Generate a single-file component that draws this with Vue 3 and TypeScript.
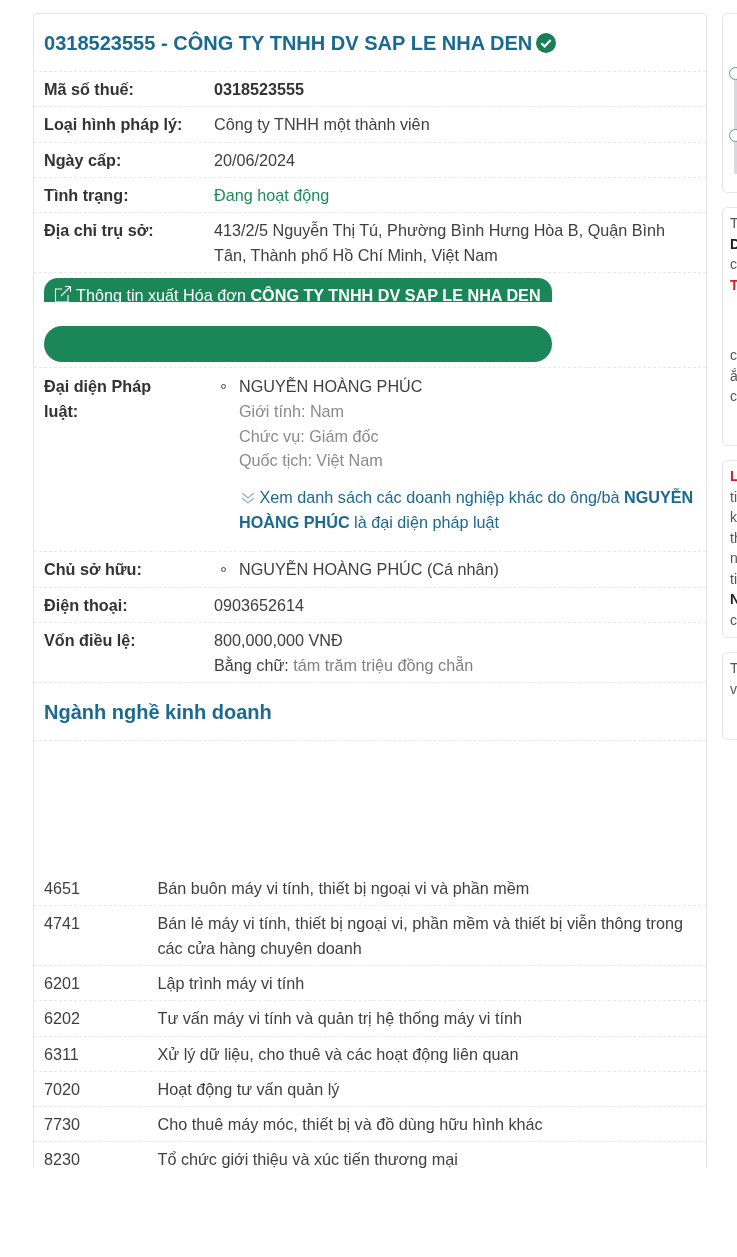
<script setup lang="ts">
interface Trade { code: string; name: string }
const trades: Trade[] = [
  { code: '4651', name: 'Bán buôn máy vi tính, thiết bị ngoại vi và phần mềm' },
  { code: '4741', name: 'Bán lẻ máy vi tính, thiết bị ngoại vi, phần mềm và thiết bị viễn thông trong các cửa hàng chuyên doanh' },
  { code: '6201', name: 'Lập trình máy vi tính' },
  { code: '6202', name: 'Tư vấn máy vi tính và quản trị hệ thống máy vi tính' },
  { code: '6311', name: 'Xử lý dữ liệu, cho thuê và các hoạt động liên quan' },
  { code: '7020', name: 'Hoạt động tư vấn quản lý' },
  { code: '7730', name: 'Cho thuê máy móc, thiết bị và đồ dùng hữu hình khác' },
  { code: '8230', name: 'Tổ chức giới thiệu và xúc tiến thương mại' },
]
</script>

<template>
  <div class="page">
    <main class="card">
      <h1 class="title">
        <span>0318523555 - CÔNG TY TNHH DV SAP LE NHA DEN</span>
        <svg class="badge" viewBox="0 0 20 20" aria-hidden="true">
          <circle cx="10" cy="10" r="10" fill="#1b7f56" />
          <path d="M5.4 10.2 8.6 13.4 14.6 7" fill="none" stroke="#fff" stroke-width="2.2" />
        </svg>
      </h1>
      <div class="row r35"><div class="label">Mã số thuế:</div><div class="value strong">0318523555</div></div>
      <div class="row r36"><div class="label">Loại hình pháp lý:</div><div class="value">Công ty TNHH một thành viên</div></div>
      <div class="row r35"><div class="label">Ngày cấp:</div><div class="value">20/06/2024</div></div>
      <div class="row r35"><div class="label">Tình trạng:</div><div class="value green">Đang hoạt động</div></div>
      <div class="row addr">
        <div class="label">Địa chỉ trụ sở:</div>
        <div class="value">413/2/5 Nguyễn Thị Tú, Phường Bình Hưng Hòa B, Quận Bình Tân, Thành phố Hồ Chí Minh, Việt Nam</div>
      </div>
      <div class="actions">
        <div class="pill clipped">
          <svg class="ext" viewBox="0 0 18 18" aria-hidden="true">
            <path d="M8 4H1.5v13H14V10M7 11 16.5 1.5M11 1.5h5.5V7" fill="none" stroke="#fff" stroke-width="1.1" />
          </svg>
          <span>Thông tin xuất Hóa đơn <b>CÔNG TY TNHH DV SAP LE NHA DEN</b></span>
        </div>
        <div class="pill solid"></div>
      </div>
      <div class="row legal">
        <div class="label">Đại diện Pháp<br>luật:</div>
        <div class="person">
          <div class="bullet-line">NGUYỄN HOÀNG PHÚC</div>
          <div class="muted">Giới tính: Nam</div>
          <div class="muted">Chức vụ: Giám đốc</div>
          <div class="muted">Quốc tịch: Việt Nam</div>
          <div class="link">
            <svg class="chev" viewBox="0 0 14 12" aria-hidden="true">
              <path d="M1 1 7 6l6-5M1 6l6 5 6-5" fill="none" stroke="#8fb0c0" stroke-width="1.1" />
            </svg>
            Xem danh sách các doanh nghiệp khác do ông/bà <b>NGUYỄN HOÀNG PHÚC</b> là đại diện pháp luật
          </div>
        </div>
      </div>
      <div class="row r36 owner"><div class="label">Chủ sở hữu:</div><div class="person"><div class="bullet-line">NGUYỄN HOÀNG PHÚC (Cá nhân)</div></div></div>
      <div class="row r35"><div class="label">Điện thoại:</div><div class="value">0903652614</div></div>
      <div class="row capital">
        <div class="label">Vốn điều lệ:</div>
        <div class="value">800,000,000 VNĐ<br>Bằng chữ: <span class="soft">tám trăm triệu đồng chẵn</span></div>
      </div>
      <h2 class="section">Ngành nghề kinh doanh</h2>
      <div class="ad-gap"></div>
      <div v-for="t in trades" :key="t.code" class="trade">
        <div class="code">{{ t.code }}</div>
        <div class="name">{{ t.name }}</div>
      </div>
    </main>

    <aside class="side">
      <section class="box b1">
        <div class="timeline">
          <i class="dot"></i>
          <i class="dot second"></i>
        </div>
      </section>
      <section class="box b2">
        <p>T</p><p><b>D</b></p><p>c</p><p class="red"><b>T</b></p>
        <p class="spaced">c</p><p>ắ</p><p>c</p>
      </section>
      <section class="box b3">
        <p class="red"><b>L</b></p><p>ti</p><p>k</p><p>th</p><p>n</p><p>ti</p><p><b>N</b></p><p>c</p>
      </section>
      <section class="box b4">
        <p>T</p><p>v</p>
      </section>
    </aside>
  </div>
</template>

<style>
html, body { margin: 0; background: #fff; overflow: hidden; }
</style>

<style scoped>
.page {
  width: 737px;
  height: 1168px;
  overflow: hidden;
  display: flex;
  align-items: flex-start;
  padding: 13px 0 0 33px;
  box-sizing: border-box;
  gap: 15px;
  font-family: "Liberation Sans", Arial, sans-serif;
  font-size: 16.2px;
  color: #3f3f3f;
  background: #fff;
  filter: blur(0.3px);
}
.card {
  flex: 0 0 674px;
  box-sizing: border-box;
  border: 1px solid #e4e4e4;
  border-radius: 4px;
}
.title {
  margin: 0;
  height: 58px;
  padding: 1px 10px 0;
  display: flex;
  align-items: center;
  gap: 4px;
  font-size: 20.05px;
  font-weight: 700;
  color: #1a6a90;
  border-bottom: 1px dashed #e9e9e9;
  box-sizing: border-box;
}
.badge { width: 20px; height: 20px; flex: none; margin-top: -1px; }
.row {
  display: flex;
  padding: 0 10px;
  border-bottom: 1px dashed #e9e9e9;
  box-sizing: border-box;
  align-items: center;
}
.r35 { height: 35px; }
.r36 { height: 36px; }
.label {
  flex: 0 0 170px;
  font-weight: 700;
  color: #333;
}
.value { flex: 1; }
.strong { font-weight: 700; color: #333; }
.green { color: #1f8a5b; }
.addr { height: 60px; align-items: flex-start; padding-top: 5px; line-height: 25px; }
.actions {
  height: 95px;
  padding: 5px 10px 0;
  border-bottom: 1px dashed #e9e9e9;
  box-sizing: border-box;
}
.pill {
  width: 508px;
  background: #1b8657;
  border-radius: 16px;
  color: #fff;
  box-sizing: border-box;
}
.clipped {
  height: 24px;
  border-radius: 14px 14px 0 0;
  overflow: hidden;
  white-space: nowrap;
  padding: 7px 0 0 10px;
  line-height: 20px;
}
.ext { width: 18px; height: 18px; margin-right: 4px; vertical-align: -2px; }
.solid { height: 36px; margin-top: 24px; border-radius: 18px; }
.legal { height: 184px; align-items: flex-start; padding-top: 6px; line-height: 25px; }
.person { flex: 1; }
.bullet-line { position: relative; padding-left: 25px; line-height: 25px; }
.bullet-line::before {
  content: "";
  position: absolute;
  left: 7px;
  top: 10px;
  width: 5px;
  height: 5px;
  border: 1px solid #444;
  border-radius: 50%;
  box-sizing: border-box;
}
.muted { padding-left: 25px; color: #8a8a8a; line-height: 24.6px; }
.link { margin: 12px 0 0 25px; color: #1a6a90; line-height: 25px; }
.chev { width: 14px; height: 12px; margin: 0 0 0 2px; vertical-align: -1px; }
.capital { height: 60px; align-items: flex-start; padding-top: 5px; line-height: 24.5px; }
.soft { color: #808080; }
.section {
  margin: 0;
  height: 58px;
  padding: 1px 10px 0;
  display: flex;
  align-items: center;
  box-sizing: border-box;
  font-size: 20px;
  font-weight: 700;
  color: #1a6a90;
  border-bottom: 1px dashed #e9e9e9;
}
.ad-gap { height: 130px; }
.trade {
  display: flex;
  padding: 5px 10px 4.75px;
  box-sizing: border-box;
  border-bottom: 1px dashed #e9e9e9;
  line-height: 24.5px;
}
.code { flex: 0 0 113.5px; }
.name { flex: 1; padding-right: 8px; }
.side {
  flex: 0 0 200px;
  display: flex;
  flex-direction: column;
  gap: 14px;
  font-size: 14px;
  color: #555;
}
.box {
  border: 1px solid #e6e6e6;
  border-radius: 5px;
  box-sizing: border-box;
  padding: 5px 7px;
}
.box p { margin: 0; line-height: 20.5px; white-space: nowrap; }
.box b { color: #222; }
.box .red b { color: #d3202a; }
.b1 { height: 180px; }
.b2 { height: 239px; }
.b3 { height: 178px; }
.b4 { height: 88px; }
.b2 .spaced { margin-top: 50px; }
.timeline {
  position: relative;
  margin: 48px 0 0 -1px;
  height: 107px;
  width: 14px;
}
.timeline::before {
  content: "";
  position: absolute;
  left: 5px;
  top: 6px;
  width: 3px;
  bottom: 0;
  background: #d9d9de;
}
.dot {
  position: absolute;
  left: 0;
  top: 0;
  width: 13px;
  height: 13px;
  border: 1.5px solid #5d9c86;
  border-radius: 50%;
  background: #fff;
  box-sizing: border-box;
}
.second { top: 62px; }
</style>
